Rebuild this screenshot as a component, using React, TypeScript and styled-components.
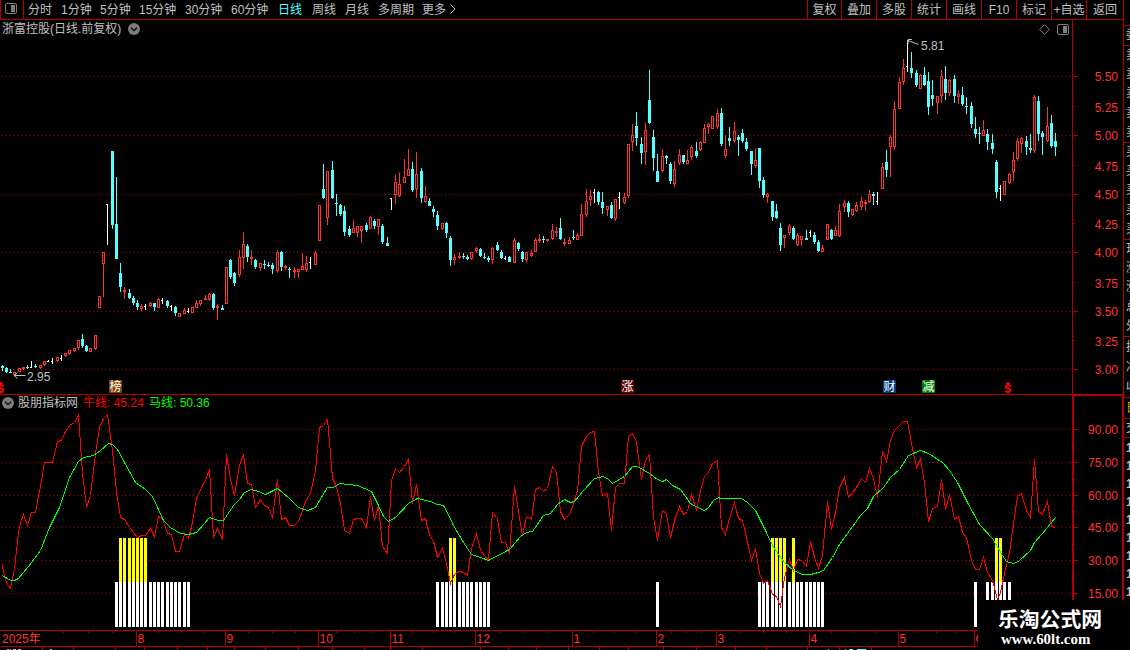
import styled, { createGlobalStyle } from 'styled-components';

const Colors = {
  line: '#b00000',
  up: '#ff3232',
  down: '#54ffff',
  text: '#c0c0c0',
  red: '#ff0000',
  green: '#00ff00',
  yellow: '#ffff00',
};

const GlobalStyle = createGlobalStyle`
  body {
    margin: 0;
    background: #000;
    overflow: hidden;
    font-family: "Liberation Sans", "Noto Sans CJK SC", sans-serif;
    font-size: 12px;
    color: ${Colors.text};
  }
  svg {
    display: block;
  }
`;

const Screen = styled.div`
  position: relative;
  display: flex;
  width: 1130px;
  height: 650px;
  overflow: hidden;
  background: #000;
`;
const Main = styled.div`
  display: flex;
  flex-direction: column;
  width: 1123px;
  flex: none;
`;
const TopBar = styled.div`
  display: flex;
  box-sizing: border-box;
  height: 20px;
  border-bottom: 1px solid ${Colors.line};
  border-left: 1px solid ${Colors.line};
  line-height: 20px;
  white-space: nowrap;
`;
const LayoutButton = styled.div`
  box-sizing: border-box;
  width: 23px;
  height: 19px;
  padding: 3px 0 0 4px;
  border-right: 1px solid ${Colors.line};
`;
const Periods = styled.div`
  display: flex;
  flex: 1;
  padding-left: 4px;
`;
const Period = styled.span<{ $width: number; $active?: boolean }>`
  width: ${({ $width }) => $width}px;
  color: ${({ $active }) => ($active ? Colors.down : Colors.text)};
`;
const Tool = styled.div<{ $width: number }>`
  box-sizing: border-box;
  width: ${({ $width }) => $width}px;
  height: 19px;
  border-left: 1px solid ${Colors.line};
  text-align: center;
`;
const Panel = styled.div<{ $height: number }>`
  position: relative;
  display: flex;
  height: ${({ $height }) => $height}px;
`;
const PanelHeader = styled.div`
  position: absolute;
  top: 1px;
  left: 2px;
  display: flex;
  align-items: center;
  height: 16px;
  line-height: 18px;
  white-space: nowrap;
`;
const HeaderText = styled.span<{ $color?: string; $width: number; $indent?: number }>`
  width: ${({ $width }) => $width}px;
  padding-left: ${({ $indent }) => $indent || 0}px;
  color: ${({ $color }) => $color || Colors.text};
`;
const PanelTools = styled.div`
  position: absolute;
  top: 4px;
  left: 1039px;
  display: flex;
  gap: 7px;
`;
const Tag = styled.span<{ $left: number; $bg: string }>`
  position: absolute;
  top: 360px;
  left: ${({ $left }) => $left}px;
  width: 13px;
  height: 13px;
  background: ${({ $bg }) => $bg};
  color: #fff;
  line-height: 14px;
  text-align: center;
`;
const Side = styled.div`
  box-sizing: border-box;
  width: 7px;
  height: 600px;
  border-left: 1px solid ${Colors.line};
  overflow: hidden;
`;
const SideGroup = styled.div<{ $height: number; $color?: string }>`
  box-sizing: border-box;
  display: flex;
  flex-direction: column;
  justify-content: space-around;
  height: ${({ $height }) => $height}px;
  padding-left: 2px;
  border-bottom: 1px solid ${Colors.line};
  color: ${({ $color }) => $color || Colors.text};
  line-height: 15px;
  white-space: nowrap;
`;
const SideTimes = styled.div`
  padding: 1px 0 0 2px;
  line-height: 18px;
  font-weight: bold;
`;
const Brand = styled.div`
  position: absolute;
  left: 978px;
  top: 600px;
  box-sizing: border-box;
  width: 152px;
  height: 50px;
  padding: 6px 0 0 20px;
  background: #000;
  color: #fff;
  white-space: nowrap;
`;
const BrandName = styled.div`
  font: bold 20.8px/25px "Noto Sans CJK SC", sans-serif;
`;
const BrandUrl = styled.div`
  padding-left: 3px;
  font: bold 14.9px/16px "Liberation Serif", serif;
`;

const periods = [
  { label: '分时', width: 33 },
  { label: '1分钟', width: 39 },
  { label: '5分钟', width: 39 },
  { label: '15分钟', width: 46 },
  { label: '30分钟', width: 46 },
  { label: '60分钟', width: 47 },
  { label: '日线', width: 34, active: true },
  { label: '周线', width: 33 },
  { label: '月线', width: 33 },
  { label: '多周期', width: 44 },
  { label: '更多', width: 28 },
];
const tools = ['复权', '叠加', '多股', '统计', '画线', 'F10', '标记', '+自选', '返回'];

type Kind = 'u' | 'd' | 'w';
// x, kind, high, body top, body bottom, low (for 'w': high, tick, low, low)
type Candle = [number, Kind, number, number, number, number];
const candles: Candle[] = [
  [2, 'd', 365, 366, 368, 371], [6, 'd', 367, 368, 372, 373], [10, 'd', 369, 372, 373, 373], [14, 'u', 372, 372, 375, 375],
  [19, 'u', 368, 368, 372, 372], [23, 'u', 367, 367, 369, 370], [27, 'd', 365, 367, 368, 369], [31, 'w', 361, 367, 368, 368],
  [35, 'd', 364, 366, 367, 368], [40, 'u', 365, 365, 368, 369], [44, 'u', 361, 361, 365, 366], [48, 'w', 360, 361, 362, 362],
  [52, 'w', 358, 361, 364, 364], [57, 'u', 357, 357, 361, 362], [61, 'w', 355, 358, 361, 361], [65, 'u', 353, 353, 356, 357],
  [69, 'u', 350, 350, 354, 355], [74, 'u', 348, 348, 351, 352], [78, 'u', 340, 340, 348, 350], [82, 'd', 334, 339, 346, 348],
  [86, 'd', 345, 346, 351, 352], [90, 'u', 348, 348, 352, 352], [95, 'u', 335, 335, 349, 350], [99, 'u', 296, 296, 308, 308],
  [103, 'u', 252, 252, 264, 297], [107, 'w', 204, 204, 245, 245], [112, 'd', 151, 151, 225, 229], [116, 'd', 177, 224, 259, 259],
  [120, 'd', 263, 273, 287, 292], [124, 'u', 287, 290, 292, 299], [129, 'd', 289, 293, 298, 299], [133, 'd', 296, 298, 303, 305],
  [137, 'd', 300, 303, 307, 310], [141, 'u', 304, 306, 309, 311], [145, 'w', 304, 306, 310, 310], [150, 'u', 302, 303, 306, 307],
  [154, 'd', 303, 303, 307, 311], [158, 'u', 298, 299, 308, 308], [162, 'w', 298, 300, 304, 304], [167, 'd', 300, 301, 306, 308],
  [171, 'w', 305, 306, 311, 311], [175, 'd', 306, 307, 313, 316], [179, 'u', 313, 313, 317, 317], [184, 'u', 308, 310, 314, 314],
  [188, 'w', 308, 311, 313, 313], [192, 'u', 307, 307, 313, 313], [196, 'u', 300, 303, 308, 308], [200, 'u', 300, 300, 304, 306],
  [205, 'u', 295, 298, 300, 300], [209, 'u', 293, 294, 300, 301], [213, 'd', 293, 294, 308, 310], [217, 'u', 304, 306, 308, 320],
  [222, 'd', 305, 308, 310, 310], [226, 'u', 267, 267, 304, 304], [230, 'd', 259, 260, 277, 279], [234, 'd', 272, 273, 283, 286],
  [239, 'u', 250, 257, 275, 277], [243, 'u', 232, 244, 258, 269], [247, 'd', 244, 246, 257, 262], [251, 'u', 250, 257, 259, 265],
  [255, 'd', 259, 260, 267, 269], [260, 'u', 263, 263, 268, 271], [264, 'd', 260, 264, 265, 269], [268, 'd', 262, 265, 266, 267],
  [272, 'd', 263, 265, 269, 274], [277, 'u', 250, 252, 271, 273], [281, 'd', 251, 252, 267, 271], [285, 'u', 265, 266, 268, 270],
  [289, 'd', 267, 269, 270, 278], [294, 'u', 267, 270, 272, 278], [298, 'u', 269, 269, 272, 278], [302, 'u', 253, 266, 270, 270],
  [306, 'u', 256, 263, 270, 272], [310, 'w', 257, 262, 269, 269], [315, 'u', 251, 253, 265, 265], [319, 'u', 205, 205, 241, 241],
  [323, 'd', 164, 189, 198, 199], [327, 'u', 171, 171, 218, 225], [332, 'd', 161, 170, 198, 199], [336, 'd', 194, 203, 204, 216],
  [340, 'd', 204, 205, 214, 216], [344, 'd', 206, 211, 232, 236], [349, 'd', 226, 229, 235, 237], [353, 'u', 220, 228, 233, 233],
  [357, 'u', 226, 226, 233, 237], [361, 'u', 226, 226, 231, 243], [366, 'd', 223, 225, 230, 232], [370, 'u', 216, 217, 229, 229],
  [374, 'd', 219, 221, 226, 229], [378, 'u', 219, 219, 227, 235], [382, 'd', 224, 226, 242, 244], [387, 'd', 237, 243, 246, 246],
  [391, 'w', 198, 198, 210, 210], [395, 'u', 175, 182, 195, 204], [399, 'u', 172, 184, 196, 197], [404, 'u', 159, 177, 183, 183],
  [408, 'u', 149, 169, 176, 176], [412, 'd', 162, 169, 190, 192], [416, 'u', 152, 174, 189, 198], [421, 'd', 168, 171, 198, 203],
  [425, 'u', 186, 196, 202, 203], [429, 'd', 198, 201, 206, 206], [433, 'd', 206, 209, 212, 217], [437, 'd', 211, 215, 226, 230],
  [442, 'u', 223, 223, 229, 230], [446, 'd', 222, 223, 233, 238], [450, 'd', 236, 238, 260, 266], [454, 'u', 254, 257, 260, 265],
  [459, 'u', 252, 256, 258, 259], [463, 'd', 253, 256, 257, 259], [467, 'd', 255, 257, 259, 260], [471, 'u', 252, 252, 259, 260],
  [476, 'u', 247, 248, 251, 253], [480, 'd', 248, 249, 256, 257], [484, 'd', 253, 257, 258, 259], [488, 'd', 256, 258, 260, 262],
  [492, 'u', 247, 248, 260, 264], [497, 'd', 242, 245, 250, 251], [501, 'd', 250, 252, 258, 259], [505, 'w', 256, 258, 260, 260],
  [509, 'd', 256, 257, 262, 262], [514, 'u', 238, 240, 263, 263], [518, 'd', 242, 243, 249, 251], [522, 'd', 251, 252, 259, 262],
  [526, 'u', 252, 252, 260, 262], [531, 'u', 250, 253, 256, 257], [535, 'u', 238, 240, 252, 252], [539, 'u', 234, 239, 241, 243],
  [543, 'd', 236, 239, 240, 243], [547, 'u', 239, 239, 241, 242], [552, 'u', 224, 230, 239, 240], [556, 'u', 227, 231, 233, 237],
  [560, 'd', 218, 228, 239, 240], [564, 'u', 238, 242, 244, 246], [569, 'u', 237, 240, 244, 244], [573, 'd', 230, 237, 238, 240],
  [577, 'u', 233, 235, 240, 240], [581, 'u', 204, 214, 236, 236], [586, 'u', 189, 201, 215, 217], [590, 'u', 190, 196, 200, 206],
  [594, 'w', 189, 192, 203, 203], [598, 'd', 191, 192, 202, 205], [602, 'd', 192, 202, 208, 214], [607, 'u', 206, 206, 210, 216],
  [611, 'd', 202, 205, 218, 219], [615, 'u', 199, 199, 219, 221], [619, 'w', 192, 197, 209, 209], [624, 'u', 193, 197, 203, 204],
  [628, 'u', 144, 144, 196, 198], [632, 'u', 124, 135, 142, 151], [636, 'd', 112, 126, 138, 146], [641, 'd', 137, 144, 153, 164],
  [645, 'u', 123, 130, 152, 165], [649, 'd', 70, 100, 123, 124], [653, 'd', 130, 137, 158, 171], [657, 'd', 154, 171, 182, 182],
  [662, 'u', 149, 156, 171, 172], [666, 'd', 155, 156, 158, 164], [670, 'd', 162, 164, 181, 184], [674, 'u', 161, 169, 184, 187],
  [679, 'u', 149, 155, 163, 165], [683, 'd', 155, 155, 162, 164], [687, 'u', 150, 160, 164, 164], [691, 'u', 145, 147, 157, 160],
  [696, 'd', 142, 151, 156, 158], [700, 'u', 141, 142, 150, 151], [704, 'u', 124, 128, 143, 143], [708, 'u', 123, 124, 127, 134],
  [712, 'u', 116, 116, 129, 129], [717, 'u', 109, 113, 127, 129], [721, 'd', 108, 113, 144, 146], [725, 'u', 135, 149, 156, 158],
  [729, 'd', 127, 138, 141, 146], [734, 'u', 122, 131, 141, 143], [738, 'd', 135, 137, 140, 156], [742, 'd', 129, 133, 141, 143],
  [746, 'd', 138, 142, 149, 151], [751, 'd', 151, 151, 164, 175], [755, 'u', 148, 160, 166, 168], [759, 'd', 148, 148, 181, 188],
  [763, 'd', 177, 180, 195, 198], [767, 'u', 193, 194, 197, 203], [772, 'd', 201, 201, 217, 221], [776, 'd', 204, 211, 218, 219],
  [780, 'd', 223, 228, 245, 251], [784, 'u', 235, 235, 238, 248], [789, 'u', 224, 226, 233, 235], [793, 'd', 226, 228, 239, 240],
  [797, 'u', 233, 235, 245, 246], [801, 'u', 236, 236, 240, 246], [806, 'd', 230, 238, 240, 240], [810, 'w', 230, 232, 237, 237],
  [814, 'd', 232, 235, 242, 244], [818, 'd', 240, 242, 251, 252], [822, 'u', 245, 248, 252, 252], [827, 'u', 224, 224, 240, 240],
  [831, 'd', 229, 230, 239, 240], [835, 'u', 226, 230, 236, 236], [839, 'u', 204, 211, 236, 237], [844, 'u', 200, 203, 207, 212],
  [848, 'd', 201, 203, 212, 217], [852, 'u', 209, 209, 215, 216], [856, 'u', 202, 205, 211, 212], [861, 'u', 197, 201, 207, 210],
  [865, 'u', 200, 202, 204, 211], [869, 'u', 190, 194, 202, 203], [873, 'd', 192, 194, 196, 205], [877, 'w', 192, 201, 205, 205],
  [882, 'u', 163, 167, 189, 189], [886, 'd', 150, 162, 170, 177], [890, 'u', 135, 137, 147, 177], [894, 'u', 101, 109, 147, 150],
  [899, 'u', 77, 82, 109, 109], [903, 'u', 59, 68, 82, 85], [907, 'w', 40, 66, 72, 72], [911, 'd', 52, 68, 73, 78],
  [916, 'd', 70, 73, 85, 87], [920, 'u', 74, 75, 89, 89], [924, 'd', 67, 75, 85, 86], [928, 'd', 72, 81, 107, 115],
  [932, 'd', 80, 95, 99, 106], [937, 'u', 96, 96, 103, 114], [941, 'u', 70, 76, 96, 103], [945, 'd', 66, 79, 93, 100],
  [949, 'u', 79, 80, 93, 96], [954, 'd', 75, 79, 96, 103], [958, 'u', 90, 94, 97, 104], [962, 'd', 87, 95, 104, 106],
  [966, 'd', 97, 106, 107, 114], [971, 'd', 102, 106, 124, 128], [975, 'd', 117, 129, 134, 138], [979, 'd', 127, 133, 134, 144],
  [983, 'u', 120, 130, 136, 136], [987, 'd', 129, 134, 142, 150], [992, 'd', 134, 143, 149, 154], [996, 'd', 160, 162, 192, 198],
  [1000, 'w', 185, 188, 201, 201], [1004, 'u', 181, 181, 195, 195], [1009, 'u', 173, 174, 183, 184], [1013, 'u', 152, 160, 172, 181],
  [1017, 'u', 138, 141, 159, 161], [1021, 'u', 137, 138, 144, 153], [1026, 'd', 136, 141, 147, 155], [1030, 'd', 134, 148, 150, 153],
  [1034, 'u', 95, 97, 151, 153], [1038, 'd', 96, 101, 134, 141], [1042, 'd', 131, 133, 137, 155], [1047, 'u', 107, 126, 141, 142],
  [1051, 'd', 115, 123, 146, 148], [1055, 'd', 133, 141, 147, 156],
];

const bullLine =
  '2,564 3,572 6,582 10,588 14,568 18,532 20,522 23,514 27,525 31,512 35,512 40,486 44,462 52,462 57,441 61,440 65,431 69,425 74,422 78,415 82,473 86,507 90,495 95,453 99,427 103,418 107,414 112,450 116,492 120,517 124,519 129,527 137,537 141,535 145,535 150,528 154,536 158,516 162,518 167,533 171,534 175,551 179,551 184,534 188,538 192,522 196,498 202,485 205,480 209,469 213,537 217,528 222,539 226,454 230,478 234,495 239,465 243,454 247,483 251,484 255,507 260,499 264,505 268,507 272,517 277,479 281,519 285,517 289,525 294,525 298,521 302,510 306,499 310,493 315,470 319,427 323,425 327,419 330,453 332,478 336,486 340,503 344,530 349,533 353,519 357,518 361,518 366,527 370,496 374,520 378,505 382,546 387,553 391,480 395,468 399,472 404,466 408,459 412,503 416,484 421,520 425,518 429,534 433,541 437,557 442,548 446,563 450,583 454,574 459,571 463,572 467,575 471,548 476,533 480,550 488,560 492,512 497,518 501,542 505,542 509,553 514,486 518,511 522,535 526,516 531,519 535,489 539,487 543,491 547,488 552,466 556,472 560,511 564,519 569,514 573,503 577,490 581,446 586,436 590,432 594,431 598,472 602,495 607,493 611,530 615,487 619,483 624,483 628,436 632,433 636,442 641,479 645,460 649,454 653,517 657,540 662,510 666,513 670,537 675,517 679,506 683,514 687,511 691,494 696,510 700,490 704,476 708,472 712,463 717,460 721,527 725,534 729,518 734,502 738,518 742,520 746,537 751,560 755,548 759,573 763,583 767,580 772,594 776,596 780,606 784,577 789,559 793,570 797,559 801,560 806,566 810,541 814,557 818,568 822,555 827,501 831,529 835,512 839,487 844,477 848,497 856,487 861,478 865,482 869,468 873,478 877,497 882,451 886,461 890,440 894,430 899,425 903,421 907,421 911,443 916,467 920,459 924,482 928,521 932,508 937,506 941,479 945,509 949,494 954,519 958,516 962,532 966,537 971,560 975,569 979,569 983,557 987,572 992,580 997,599 1000,592 1004,573 1009,552 1013,523 1017,496 1021,493 1026,510 1030,517 1034,459 1038,511 1042,514 1047,501 1051,526 1055,527';
const horseLine =
  '2,575 10,580 14,580 18,578 28,566 40,550 49,527 59,507 69,477 78,461 83,457 93,455 100,450 108,443 112,444 117,449 124,462 135,482 145,489 152,496 163,520 170,527 180,533 188,534 196,532 203,524 209,517 218,520 223,520 233,505 239,499 244,492 251,489 258,491 265,494 277,488 288,497 298,507 307,510 315,507 327,487 333,487 339,483 357,485 371,491 378,505 383,516 388,521 395,517 408,503 417,498 430,501 437,504 443,505 447,512 453,525 465,545 471,554 480,557 488,560 509,549 520,536 526,532 532,531 543,515 550,513 557,504 564,499 570,502 574,501 583,490 594,478 603,476 608,479 612,483 624,476 632,466 637,466 649,473 657,479 662,481 666,479 672,485 680,489 690,503 697,507 704,510 708,507 713,500 718,497 720,498 741,498 747,502 755,510 765,530 773,547 784,562 793,570 802,574 810,574 818,572 823,570 832,557 839,544 860,515 867,508 873,496 883,487 890,477 899,469 908,455 920,450 928,453 942,462 949,470 957,482 967,502 979,524 992,538 1002,555 1006,561 1013,563 1018,561 1030,550 1034,542 1042,533 1055,517';

const whiteBars = [
  115, 119, 123, 128, 132, 136, 140, 144, 149, 153, 157, 161, 166, 170, 174, 178, 183, 187,
  436, 441, 445, 449, 453, 458, 462, 466, 470, 475, 479, 483, 487, 656,
  758, 762, 766, 771, 775, 779, 783, 788, 792, 796, 800, 805, 809, 813, 817, 821,
  974, 986, 991, 995, 999, 1003, 1008,
];
const yellowBars = [119, 123, 128, 132, 136, 140, 144, 449, 453, 771, 775, 779, 783, 792, 995, 999];

const priceAxis = [
  { y: 76, label: '5.50', text: 81 }, { y: 106, label: '5.25', text: 112 }, { y: 135, label: '5.00', text: 140 },
  { y: 165, label: '4.75', text: 171 }, { y: 194, label: '4.50', text: 199 }, { y: 223, label: '4.25', text: 229 },
  { y: 252, label: '4.00', text: 257 }, { y: 282, label: '3.75', text: 288 }, { y: 311, label: '3.50', text: 316 },
  { y: 340, label: '3.25', text: 346 }, { y: 369, label: '3.00', text: 374 },
];
const indicatorAxis = [
  { y: 429, label: '90.00' }, { y: 446 }, { y: 462, label: '75.00' }, { y: 479 }, { y: 495, label: '60.00' },
  { y: 511 }, { y: 527, label: '45.00' }, { y: 544 }, { y: 560, label: '30.00' }, { y: 577 }, { y: 593, label: '15.00' },
];
const months = [
  { x: 136, label: '8' }, { x: 225, label: '9' }, { x: 318, label: '10' }, { x: 390, label: '11' },
  { x: 475, label: '12' }, { x: 572, label: '1' }, { x: 656, label: '2' }, { x: 716, label: '3' },
  { x: 809, label: '4' }, { x: 898, label: '5' }, { x: 974, label: '6' },
];
const weekTicks = [
  63, 88, 112, 158, 181, 203, 248, 272, 295, 336, 354, 372, 411, 433, 454, 499, 524, 548,
  593, 614, 635, 671, 686, 701, 739, 763, 786, 831, 854, 876, 917, 936, 955,
];
const bottomTicks = [
  42, 73, 115, 144, 177, 207, 234, 265, 298, 332, 364, 390, 422, 480, 508, 536, 568, 599, 628,
  663, 696, 735, 766, 807, 839, 871,
];

function SplitIcon() {
  return (
    <svg width="12" height="12" viewBox="0 0 12 12">
      <rect x="0.5" y="0.5" width="11" height="10" rx="1.5" fill="none" stroke="#808080" />
      <rect x="6" y="2" width="4" height="7" fill="#808080" />
    </svg>
  );
}

function DropIcon() {
  return (
    <svg width="12" height="12" viewBox="0 0 12 12">
      <circle cx="6" cy="6" r="6" fill="#7c7c7c" />
      <path d="M3 4.8 L6 7.6 L9 4.8" fill="none" stroke="#111" strokeWidth="1.4" />
    </svg>
  );
}

function GridLine({ y }: { y: number }) {
  return <path d={`M1 ${y + 0.5}H1071`} stroke={Colors.line} strokeDasharray="1 3" />;
}

function CandleShape({ candle }: { candle: Candle }) {
  const [x, kind, high, top, bottom, low] = candle;
  if (kind === 'w') {
    return <path fill="#fff" d={`M${x} ${high}h1V${low}h-1zM${x - 1} ${top}h1v1h-1z`} />;
  }
  if (kind === 'd') {
    return (
      <path
        fill={Colors.down}
        d={`M${x} ${high}h1V${low}h-1zM${x - 1} ${top}h3V${bottom}h-3z`}
      />
    );
  }
  return (
    <g fill={Colors.up}>
      <path d={`M${x} ${high}h1V${top}h-1zM${x} ${bottom}h1V${low}h-1z`} />
      <path
        fillRule="evenodd"
        d={`M${x - 1} ${top}h3V${bottom}h-3zM${x} ${top + 1}h1V${bottom - 1}h-1z`}
      />
    </g>
  );
}

function DollarMark({ x }: { x: number }) {
  return (
    <g fill="none" stroke={Colors.red} strokeWidth="1.8">
      <path d={`M${x + 3} 385.6H${x - 1.6}L${x - 2.2} 387.6L${x + 2.2} 389.2L${x + 1.8} 391.6H${x - 3}`} />
      <path d={`M${x} 382v3M${x} 391v2.5`} />
      <path d={`M${x - 2} 383.5h4`} strokeWidth="1" />
    </g>
  );
}

function PriceChart() {
  return (
    <svg width="1072" height="374" viewBox="0 20 1072 374">
      <g shapeRendering="crispEdges">
        {priceAxis.filter((_, i) => i % 2 === 0).map(({ y }) => (
          <GridLine key={y} y={y} />
        ))}
        {candles.map((candle) => (
          <CandleShape key={candle[0]} candle={candle} />
        ))}
      </g>
      <g stroke={Colors.text} fill="none">
        <path d="M908 40.5L918.5 44.5M912 39.5H908V44" />
        <path d="M14 375.5H25.5M17.5 372.5L14 375.5L17.5 378.5" />
      </g>
      <g fill={Colors.text} fontSize="12">
        <text x="921" y="50">5.81</text>
        <text x="27" y="381">2.95</text>
      </g>
      <DollarMark x={1} />
      <DollarMark x={1008} />
    </svg>
  );
}

function PriceScale() {
  return (
    <svg width="51" height="374" viewBox="1072 20 51 374">
      <path d="M1072.5 20V394" stroke={Colors.line} />
      {priceAxis.map(({ y, label, text }, i) => (
        <g key={label}>
          <path d={`M1073 ${y + 0.5}h${i % 2 ? 2 : 5}`} stroke={Colors.line} />
          <text x="1118" y={text} textAnchor="end" fill={Colors.up} fontSize="12">
            {label}
          </text>
        </g>
      ))}
    </svg>
  );
}

function IndicatorChart() {
  return (
    <svg width="1072" height="236" viewBox="0 394 1072 236" shapeRendering="crispEdges">
      <path d="M0 394.5H1072" stroke={Colors.line} />
      {indicatorAxis.filter(({ label }) => label).map(({ y }) => (
        <GridLine key={y} y={y} />
      ))}
      {whiteBars.map((x) => (
        <rect key={x} x={x} y="582" width="3" height="45" fill="#fff" />
      ))}
      {yellowBars.map((x) => (
        <rect key={x} x={x} y="538" width="3" height="44" fill={Colors.yellow} />
      ))}
      <g fill="none" transform="translate(0.5 0.5)">
        <polyline points={bullLine} stroke={Colors.red} />
        <polyline points={horseLine} stroke={Colors.green} />
      </g>
    </svg>
  );
}

function IndicatorScale() {
  return (
    <svg width="51" height="236" viewBox="1072 394 51 236">
      <path d="M1073 630V395H1123V630" fill="none" stroke={Colors.line} strokeWidth="2" />
      {indicatorAxis.map(({ y, label }) => (
        <g key={y}>
          <path d={`M1074 ${y + 0.5}h${label ? 4 : 1}`} stroke={Colors.line} />
          {label && (
            <text x="1118" y={y + 5} textAnchor="end" fill={Colors.up} fontSize="12">
              {label}
            </text>
          )}
        </g>
      ))}
    </svg>
  );
}

function TimeScale() {
  return (
    <svg width="1123" height="20" viewBox="0 630 1123 20">
      <g stroke={Colors.line} fill="none">
        <path d="M0 630.5H1123M0 646.5H1123" />
        <path d={weekTicks.map((x) => `M${x + 0.5} 631v2`).join('')} />
        <path d={bottomTicks.map((x) => `M${x + 0.5} 647v3`).join('')} />
        <path d={months.map(({ x }) => `M${x + 0.5} 631v15`).join('')} />
      </g>
      <g fill={Colors.up} fontSize="12">
        <text x="2" y="643">2025年</text>
        {months.map(({ x, label }) => (
          <text key={x} x={x + 1.5} y="643">
            {label}
          </text>
        ))}
      </g>
      <path
        d="M7 649.5h2M10 649.5h1M13 649.5h3M18 649.5h3M50 649.5h2M828 649.5h1M845 649.5h1"
        stroke={Colors.text}
      />
      <path d="M849 649.5h4M857 649.5h9" stroke={Colors.down} />
    </svg>
  );
}

export default function App() {
  return (
    <Screen>
      <GlobalStyle />
      <Main>
        <TopBar>
          <LayoutButton>
            <SplitIcon />
          </LayoutButton>
          <Periods>
            {periods.map(({ label, width, active }) => (
              <Period key={label} $width={width} $active={active}>
                {label}
              </Period>
            ))}
            <svg width="6" height="18" viewBox="0 0 6 18">
              <path d="M0.5 4.5L5 9L0.5 13.5" fill="none" stroke={Colors.text} />
            </svg>
          </Periods>
          {tools.map((tool, i) => (
            <Tool key={tool} $width={i === 0 ? 34 : i === 8 ? 37 : 35}>
              {tool}
            </Tool>
          ))}
        </TopBar>
        <Panel $height={374}>
          <PriceChart />
          <PriceScale />
          <PanelHeader>
            <HeaderText $width={126}>浙富控股(日线.前复权)</HeaderText>
            <DropIcon />
          </PanelHeader>
          <PanelTools>
            <svg width="11" height="11" viewBox="0 0 11 11">
              <path d="M5.5 0.7L10.3 5.5L5.5 10.3L0.7 5.5Z" fill="none" stroke="#808080" />
            </svg>
            <SplitIcon />
          </PanelTools>
          <Tag $left={109} $bg="#804000">榜</Tag>
          <Tag $left={621} $bg="#600000">涨</Tag>
          <Tag $left={883} $bg="#003c78">财</Tag>
          <Tag $left={922} $bg="#008000">减</Tag>
        </Panel>
        <Panel $height={236}>
          <IndicatorChart />
          <IndicatorScale />
          <PanelHeader>
            <DropIcon />
            <HeaderText $width={65} $indent={4}>股朋指标网</HeaderText>
            <HeaderText $width={66} $color={Colors.red}>牛线: 45.24</HeaderText>
            <HeaderText $width={66} $color={Colors.green}>马线: 50.36</HeaderText>
          </PanelHeader>
        </Panel>
        <TimeScale />
      </Main>
      <Side>
        <SideGroup $height={26} />
        <SideGroup $height={20}>委</SideGroup>
        <SideGroup $height={97}>
          {['卖五', '卖四', '卖三', '卖二', '卖一'].map((row) => (
            <span key={row}>{row}</span>
          ))}
        </SideGroup>
        <SideGroup $height={97}>
          {['买一', '买二', '买三', '买四', '买五'].map((row) => (
            <span key={row}>{row}</span>
          ))}
        </SideGroup>
        <SideGroup $height={97}>
          {['现价', '涨跌', '涨幅', '总量', '外盘'].map((row) => (
            <span key={row}>{row}</span>
          ))}
        </SideGroup>
        <SideGroup $height={61}>
          {['换手', '净资', '收益'].map((row) => (
            <span key={row}>{row}</span>
          ))}
        </SideGroup>
        <SideGroup $height={21} $color="#c0c000">
          日
        </SideGroup>
        <SideGroup $height={19}>交</SideGroup>
        <SideTimes>
          {Array.from({ length: 9 }, (_, i) => (
            <div key={i}>1</div>
          ))}
        </SideTimes>
      </Side>
      <Brand>
        <BrandName>乐淘公式网</BrandName>
        <BrandUrl>www.60lt.com</BrandUrl>
      </Brand>
    </Screen>
  );
}
